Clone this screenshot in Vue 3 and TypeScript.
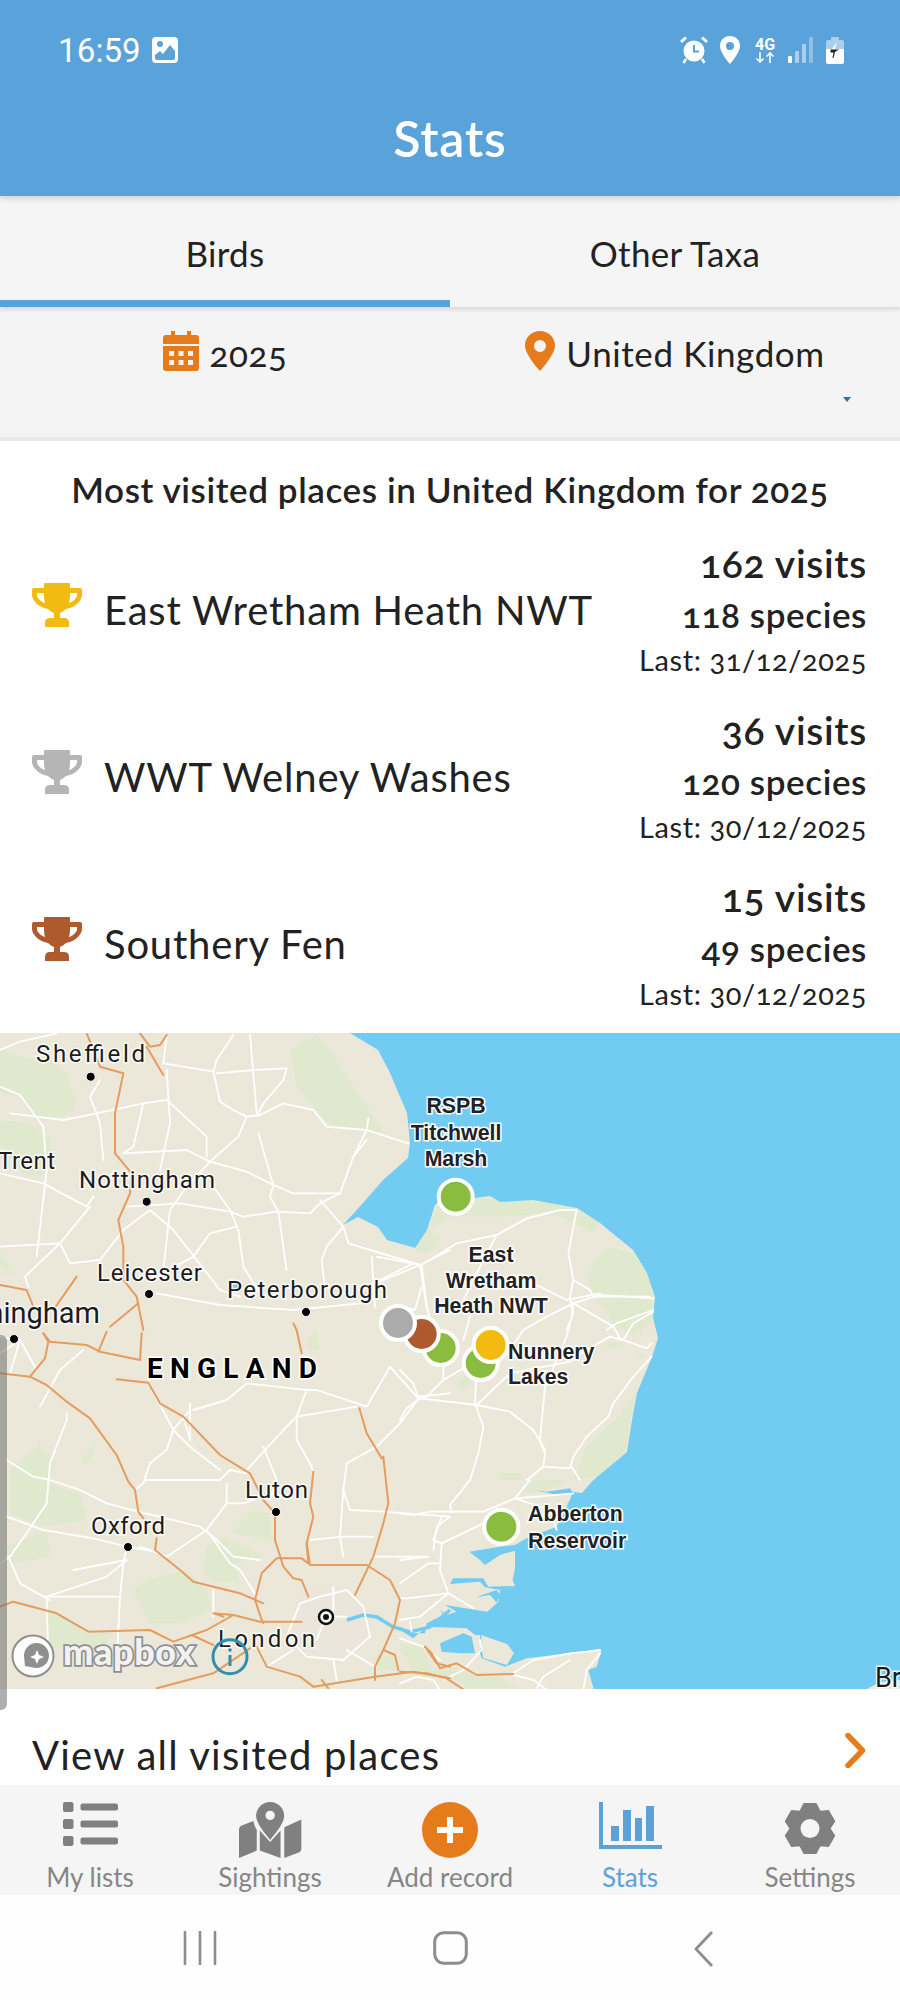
<script setup lang="ts">
interface Zone { x: number; y: number; green: string[]; water: string[]; white: string[]; orange: string[] }

const zones: Zone[] = [
  {
    x: 0, y: 1030,
    green: [
      'M0 50 L60 80 L150 90 L200 130 L230 220 L190 260 L110 275 L60 200 L0 190Z',
      'M0 270 L90 280 L150 330 L160 390 L130 440 L70 430 L0 340Z',
      'M870 60 L950 15 L990 60 L1060 170 L1100 230 L1150 305 L1100 300 L990 285 L950 240 L890 170Z',
      'M0 670 L20 690 L45 740 L20 730 L0 710Z',
      'M1240 650 L1290 605 L1320 630 L1300 660 L1260 670Z',
    ],
    water: ['M692 765 L718 755 L722 775 L695 780Z'],
    white: [
      'M650 130 L760 120 L860 115',
      'M490 100 L640 125 L660 215 L700 240 L740 260 L780 255 L850 220 L940 240 L980 290 L1100 300 L1225 340',
      'M750 15 L765 190 L770 250',
      'M700 15 L650 90 L640 125',
      'M860 115 L850 150 L790 220 L775 250',
      'M740 260 L715 320 L630 395 L560 470 L510 540 L490 720',
      'M630 395 L740 425 L820 465 L880 490 L1020 490 L1060 380 L1100 300',
      'M775 310 L820 465 L810 500 L835 545 L860 720',
      'M500 210 L430 220 L400 350 L370 370 L560 360 L630 395',
      'M500 210 L620 320 L620 380',
      'M500 120 L510 280 L480 420',
      'M300 150 L270 200 L300 280 L310 390',
      'M0 170 L60 195 L130 290 L140 420 L110 680',
      'M30 250 L190 270 L290 250 L430 220',
      'M0 430 L130 460 L260 530 L280 500',
      'M640 470 L690 540 L715 600 L730 710 L780 790',
      'M380 530 L540 520 L690 545 L730 560 L830 545 L930 550 L960 520 L1020 490',
      'M960 510 L1030 590 L1045 640 L1260 705 L1350 660',
      'M1030 590 L980 650 L965 690 L975 780',
      'M370 600 L450 540 L520 600 L590 690 L660 780 L720 800',
      'M0 650 L180 640 L210 700 L300 690 L370 600',
      'M180 640 L75 740 L85 770',
      'M470 790 L660 825 L880 840 L1080 820',
      'M1260 705 L1280 830',
      'M1080 780 L1260 705',
      'M710 590 L630 610 L580 680 L480 735',
      'M0 60 L60 35 L170 10',
      'M490 100 L500 20',
      'M270 530 L180 640',
      'M1060 380 L1100 330',
      'M1100 300 L1105 265',
    ],
    orange: [
      'M260 10 L300 110 L370 130 L345 250 L345 370 L395 430 L390 490 L355 570 L370 650 L370 750 L410 800 L430 900',
      'M420 10 L450 50 L480 45 L500 15',
      'M440 50 L490 135',
      'M230 740 L160 840',
      'M0 765 L80 780 L100 830',
      'M415 820 L330 890',
      'M880 880 L890 900',
    ],
  },
  {
    x: 300, y: 1030,
    green: [
      'M400 560 L420 510 L520 505 L600 510 L700 510 L830 535 L900 580 L880 610 L760 550 L600 560 L450 560 L390 600Z',
      'M345 640 L380 600 L420 620 L410 650 L350 665Z',
      'M860 730 L920 650 L1000 670 L1060 760 L1050 850 L960 880 L880 800Z',
    ],
    water: [],
    white: [
      'M365 705 L470 640 L590 615 L680 565 L780 540 L830 540 L805 670 L820 750 L870 780 L880 800 L1050 800',
      'M590 615 L550 690 L510 770 L480 830',
      'M640 735 L720 770 L800 810 L900 790',
      'M820 750 L810 800 L820 850 L800 900',
      'M1060 840 L950 880 L920 900',
      'M365 705 L380 830 L400 900',
      'M365 705 L230 680',
      'M215 680 L225 830',
      'M340 700 L220 760 L190 780',
    ],
    orange: [],
  },
  {
    x: 0, y: 1330,
    green: [
      'M30 420 L120 345 L170 400 L140 460 L240 490 L260 570 L130 590 L30 550Z',
      'M610 720 L620 650 L670 620 L720 640 L790 680 L700 700 L720 750 L640 760Z',
      'M690 610 L760 540 L810 550 L815 640 L760 620Z',
      'M400 780 L440 750 L560 720 L620 780 L640 840 L540 880 L450 880Z',
      'M140 830 L230 880 L260 910 L340 910 L300 970 L150 950Z',
      'M240 400 L290 330 L270 400Z',
      'M920 30 L950 0 L960 60 L925 60Z',
      'M1130 975 L1180 980 L1190 1020 L1130 1020Z',
      'M880 1075 L1000 1060 L1000 1080Z',
      'M20 650 L140 600 L150 680 L30 700Z',
    ],
    water: [],
    white: [
      'M250 60 L180 120 L120 230',
      'M445 158 L520 300 L570 350 L660 420',
      'M550 260 L570 330 L570 220',
      'M20 390 L100 440 L150 450 L240 480 L320 520 L415 545 L600 590 L640 620 L700 680 L780 690',
      'M20 560 L130 600 L280 625 L380 650 L470 665',
      'M380 650 L370 700 L360 800 L350 1000',
      'M220 720 L380 690',
      'M0 700 L30 680 L100 580 L140 520 L150 400 L200 270 L200 250',
      'M150 810 L60 760 L25 680',
      'M140 800 L320 740 L380 690',
      'M450 400 L500 360 L520 300 L570 240',
      'M450 400 L430 460 L405 480',
      'M440 450 L660 450 L690 420 L740 430',
      'M680 460 L680 520 L730 520 L760 510',
      'M680 520 L620 600',
      'M740 420 L850 300 L890 260 L1070 230',
      'M790 350 L830 450 L810 510',
      'M890 260 L890 330 L930 400 L940 425',
      'M890 260 L920 180 L950 180 L1100 230 L1170 110 L1250 200 L1350 190',
      'M920 180 L740 160 L680 210 L580 240',
      'M1040 400 L1130 350 L1200 280 L1260 200',
      'M1040 400 L1030 480 L1050 540 L1150 545 L1350 560',
      'M1030 480 L1020 620 L1030 680',
      'M930 630 L1030 620 L1120 620',
      'M1120 680 L1280 680',
      'M1350 560 L1310 590 L1300 660',
      'M620 600 L690 700 L720 720 L770 800',
      'M620 600 L500 680 L420 650',
      'M900 820 L960 800 L1040 780 L1090 830 L1110 920 L1030 990 L920 980 L860 920 L900 820',
      'M978 860 L1040 860 M978 860 L950 930 M1000 770 L1000 840',
      'M60 30 L0 70 M60 30 L30 130 M60 30 L110 120 M45 30 L0 20',
      'M800 1010 L880 960 M1000 990 L1010 1050 M1125 1010 L1040 960',
      'M640 780 L640 860 M360 800 L130 800',
      'M140 800 L145 1000',
    ],
    orange: [
      'M130 10 L150 35 L260 45 L300 65 L420 90',
      'M130 10 L145 35 L135 85 L90 140',
      'M0 130 L90 140 L140 165 L200 215 L270 265 L350 375 L385 455 L405 480 L415 545 L430 565',
      'M320 5 L295 65',
      'M425 10 L420 90',
      'M350 148 L445 158 L480 220 L550 260 L660 375 L750 430 L790 510 L825 550 L825 630 L850 710 L880 745 L905 750 L925 800',
      'M890 0 L905 70',
      'M1078 235 L1100 310 L1145 385 L1150 380 L1165 520 L1150 580 L1120 680 L1065 795',
      'M940 425 L930 520 L940 560 L920 640 L930 705 L1100 705 L1170 750 L1200 810 L1185 880 L1150 960 L1125 1010 L1125 1050',
      'M920 640 L925 700 L905 685 L830 685 L785 730 L765 810 L785 870 L790 880',
      'M905 875 L780 875 L700 855 L640 850 L670 860',
      'M700 855 L620 900 L520 935 L450 900 L265 905 L170 850 L40 815 L0 830',
      'M470 625 L465 660 L540 720 L580 755 L720 790 L790 820',
      'M575 915 L640 945',
      'M750 955 L640 1030 L470 1075',
      'M770 950 L800 1010 L900 1040 L940 1070 L1125 1040 L1240 1025 L1350 1045',
      'M1150 960 L1185 975 L1195 1020',
      'M965 1050 L985 1075',
      'M1275 950 L1310 1000 L1350 1010',
    ],
  },
  {
    x: 400, y: 1280,
    green: [
      'M170 315 L200 280 L220 300 L190 330Z',
      'M600 60 L680 20 L750 50 L760 120 L700 170 L640 130Z',
      'M610 195 L660 185 L670 195 L640 205Z',
      'M705 225 L735 225 L720 240Z',
      'M680 370 L710 340 L690 420 L680 510 L590 590 L520 600 L560 500 L620 440 L670 400Z',
      'M300 580 L360 580 L370 600 L300 600Z',
    ],
    water: [],
    white: [
      'M65 20 L45 90 L10 80',
      'M210 110 L190 180',
      'M760 55 L600 45 L520 70 L440 110 L370 150 L330 210',
      'M520 70 L515 110 L500 170 L435 320 L420 480 L435 520 L430 560 L380 600',
      'M760 95 L700 130 L670 180 L630 170 L560 210 L510 245 L330 280 L230 375',
      'M670 180 L740 205 L755 190',
      'M755 230 L700 290 L640 370 L625 410 L560 470 L520 530 L510 565 L430 560',
      'M520 70 L640 140 L660 175',
      'M230 260 L225 370 L250 440 L235 520 L210 600',
      'M230 375 L330 395 L400 450 L435 510',
      'M230 375 L60 355 L20 385 L0 420',
      'M60 355 L80 350 L130 300 L190 265',
      'M0 270 L40 310 L55 355',
      'M130 260 L130 300',
      'M515 560 L540 600',
    ],
    orange: [],
  },
  {
    x: 400, y: 1480,
    green: [
      'M0 490 L70 500 L90 560 L130 570 L170 560 L230 590 L300 590 L360 628 L200 628 L170 600 L100 590 L50 590 L0 510Z',
      'M350 40 L400 0 L500 0 L470 20 L400 40Z',
    ],
    water: [
      'M580 0 L545 40 L520 35 L500 80 L470 140 L380 175 L345 195 L300 200 L208 215 L240 240 L255 255 L300 225 L345 212 L345 265 L338 300 L345 318 L300 330 L295 365 L262 395 L135 375 L170 395 L140 405 L120 390 L130 405 L80 430 L75 460 L40 460 L0 440 L0 450 L40 475 L80 440 L200 445 L225 465 L240 465 L240 520 L245 535 L315 560 L380 535 L510 520 L605 510 L590 560 L565 570 L582 630 L1500 630 L1500 0Z',
      'M150 312 L160 295 L250 295 L265 320 L345 318 L300 330 L255 322 L240 305 Z',
      'M228 352 L290 330 L300 345 L290 368 L270 345Z',
      'M120 490 L190 460 L215 470 L225 520 L180 520 L125 515Z',
      'M405 30 L470 45 L520 40 L510 25 L440 35Z',
    ],
    white: [
      'M210 0 L170 50 L150 75 L155 95 L90 95 L40 105 L0 100',
      'M150 95 L250 95 L345 55 L390 0',
      'M345 55 L450 90 L470 150',
      'M350 55 L410 50 L520 40',
      'M125 110 L100 180 L125 190 L250 130 L300 100',
      'M125 190 L120 270 L145 340 L220 385',
      'M145 340 L20 355 L0 355',
      'M120 250 L85 250 L0 310',
      'M85 230 L0 240',
      'M0 420 L60 410 L145 340',
      'M30 425 L35 455',
      'M0 475 L70 500 L120 540',
      'M240 480 L245 510 L190 570 L130 600',
      'M340 580 L400 540 L510 520 L560 515 L600 510',
      'M510 540 L430 590 L410 625',
      'M340 585 L400 600 L440 630',
      'M600 520 L560 570 L550 630',
      'M0 610 L50 590 L100 600 L120 630',
    ],
    orange: [
      'M75 500 L95 520 L120 565 L170 550 L230 585 L340 582',
      'M0 575 L80 580 L140 595 L190 628',
    ],
  },
]

const seaNorth =
  'M350 1033 L378 1050 L390 1073 L407 1113 L410 1143 L408 1158 L383 1180 L363 1203 L343 1225 L358 1217 L378 1227 L387 1240 L412 1247 L415 1248 L427 1230 L435 1205 L440 1200 L475 1198 L490 1196 L500 1202 L533 1200 L577 1208 L600 1223 L633 1250 L647 1273 L655 1297 L653 1317 L658 1338 L652 1357 L637 1393 L632 1420 L627 1452 L597 1477 L593 1481 L900 1481 L900 1033Z'

interface PlaceLabel { t: string; x: number; y: number; w: number }
const places: PlaceLabel[] = [
  { t: 'Sheffield', x: 36, y: 1062, w: 109 },
  { t: 'Trent', x: -2, y: 1169, w: 57 },
  { t: 'Nottingham', x: 79, y: 1188, w: 136 },
  { t: 'Leicester', x: 97, y: 1281, w: 105 },
  { t: 'Peterborough', x: 227, y: 1298, w: 160 },
  { t: 'Luton', x: 245, y: 1498, w: 63 },
  { t: 'Oxford', x: 91, y: 1534, w: 74 },
  { t: 'London', x: 218, y: 1647, w: 97 },
]
const dots: [number, number][] = [
  [90.7, 1076.7], [146.7, 1201.7], [149, 1294], [306, 1312], [14, 1339], [276, 1512], [128, 1547],
]
interface SiteLabel { t: string; x: number; y: number; a: string }
const sites: SiteLabel[] = [
  { t: 'RSPB', x: 456, y: 1113, a: 'middle' },
  { t: 'Titchwell', x: 456, y: 1140, a: 'middle' },
  { t: 'Marsh', x: 456, y: 1166, a: 'middle' },
  { t: 'East', x: 491, y: 1262, a: 'middle' },
  { t: 'Wretham', x: 491, y: 1288, a: 'middle' },
  { t: 'Heath NWT', x: 491, y: 1313, a: 'middle' },
  { t: 'Nunnery', x: 508, y: 1359, a: 'start' },
  { t: 'Lakes', x: 508, y: 1384, a: 'start' },
  { t: 'Abberton', x: 528, y: 1521, a: 'start' },
  { t: 'Reservoir', x: 528, y: 1548, a: 'start' },
]
const pins: [number, number, string][] = [
  [455.7, 1196.7, '#8abd3f'],
  [440.7, 1348, '#8abd3f'],
  [421.7, 1334, '#ad5b2e'],
  [398, 1323, '#ababab'],
  [480.7, 1363, '#8abd3f'],
  [490.7, 1345, '#f2bb12'],
  [501.3, 1526.7, '#8abd3f'],
]

const rows = [
  { name: 'East Wretham Heath NWT', visits: '162 visits', species: '118 species', last: 'Last: 31/12/2025', color: '#f2bb12' },
  { name: 'WWT Welney Washes', visits: '36 visits', species: '120 species', last: 'Last: 30/12/2025', color: '#b5b5b5' },
  { name: 'Southery Fen', visits: '15 visits', species: '49 species', last: 'Last: 30/12/2025', color: '#ad5b2e' },
]

function buildGear(cx: number, cy: number, outer: number, root: number): string {
  const parts: string[] = []
  for (let i = 0; i < 6; i++) {
    const a = (i * Math.PI) / 3 - Math.PI / 2
    const pts: [number, number][] = [
      [a - 0.5, root], [a - 0.24, outer], [a + 0.24, outer], [a + 0.5, root],
    ]
    for (const [ang, r] of pts) {
      parts.push(`${(cx + r * Math.cos(ang)).toFixed(2)} ${(cy + r * Math.sin(ang)).toFixed(2)}`)
    }
  }
  return 'M' + parts.join(' L') + 'Z'
}
const gearPath = buildGear(26, 26.5, 25.5, 20)
</script>

<template>
  <div class="page">
    <header class="top">
      <div class="status">
        <div class="status-left">
          <span class="time">16:59</span>
          <svg class="img-icon" viewBox="0 0 26 26" width="26" height="26">
            <path fill="#fff" fill-rule="evenodd" d="M4 0H22Q26 0 26 4V22Q26 26 22 26H4Q0 26 0 22V4Q0 0 4 0ZM3 18V21Q3 23 5 23H21Q23 23 23 21V14L18 8L11 17L8 14ZM8 4A3 3 0 1 0 8 10A3 3 0 1 0 8 4Z" />
          </svg>
        </div>
        <div class="status-right">
          <svg viewBox="0 0 28 28" width="28" height="28">
            <circle cx="14" cy="15" r="10.5" fill="#fff" />
            <path d="M14 9V15.5H19" fill="none" stroke="#5aa2da" stroke-width="2" />
            <path d="M1 6L6 1.5M27 6L22 1.5" stroke="#fff" stroke-width="3" />
            <path d="M6 23L3.5 27M22 23L24.5 27" stroke="#fff" stroke-width="2.5" />
          </svg>
          <svg viewBox="0 0 20 28" width="20" height="28">
            <path fill="#fff" fill-rule="evenodd" d="M10 0C4 0 0 4.400 0 10C0 17 10 28 10 28C10 28 20 17 20 10C20 4.400 16 0 10 0ZM10 6A4 4 0 1 1 10 14A4 4 0 1 1 10 6Z" />
          </svg>
          <div class="net">
            <span>4G</span>
            <svg viewBox="0 0 20 11" width="20" height="11">
              <path d="M5 0V10M1.500 6.500L5 10L8.500 6.500M15 11V1M11.500 4.500L15 1L18.500 4.500" fill="none" stroke="#fff" stroke-width="1.600" />
            </svg>
          </div>
          <svg viewBox="0 0 26 26" width="26" height="26">
            <rect x="0" y="19" width="4" height="7" rx="1" fill="#fff" />
            <rect x="7" y="14" width="4" height="12" rx="1" fill="#a9cfec" />
            <rect x="14" y="7" width="4" height="19" rx="1" fill="#a9cfec" />
            <rect x="21" y="0" width="4" height="26" rx="1" fill="#8fc0e6" />
          </svg>
          <svg viewBox="0 0 18 27" width="18" height="27">
            <path fill="#a9cfec" d="M5 0H13V3H16Q18 3 18 5V12H0V5Q0 3 2 3H5Z" />
            <path fill="#fff" d="M0 12H18V25Q18 27 16 27H2Q0 27 0 25Z" />
            <path fill="#fff" d="M11 5L6 12H9Z" />
            <path fill="#222" d="M4.500 12.500H13L9 15L7.500 21L6.500 21L7.500 15.500H4.500Z" />
          </svg>
        </div>
      </div>
      <h1 class="title">Stats</h1>
    </header>

    <nav class="tabs">
      <div class="tab active">Birds</div>
      <div class="tab">Other Taxa</div>
    </nav>

    <section class="filters">
      <div class="filter">
        <svg viewBox="0 0 36 40" width="36" height="40">
          <path fill="#e67b1c" fill-rule="evenodd" d="M8 0H12V4H24V0H28V4H33Q36 4 36 7V13H0V7Q0 4 3 4H8ZM0 15H36V37Q36 40 33 40H3Q0 40 0 37ZM6 20V25H11V20ZM15.500 20V25H20.500V20ZM25 20V25H30V20ZM6 29V34H11V29ZM15.500 29V34H20.500V29ZM25 29V34H30V29Z" />
        </svg>
        <span class="filter-text">2025</span>
      </div>
      <div class="filter">
        <svg viewBox="0 0 30 40" width="30" height="40">
          <path fill="#e67b1c" fill-rule="evenodd" d="M15 0C6.500 0 0 6.500 0 14.500C0 24 15 40 15 40C15 40 30 24 30 14.500C30 6.500 23.500 0 15 0ZM15 9A6 6 0 1 1 15 21A6 6 0 1 1 15 9Z" />
        </svg>
        <span class="filter-text">United Kingdom</span>
      </div>
      <i class="caret"></i>
    </section>

    <main class="content">
      <h2 class="heading">Most visited places in United Kingdom for 2025</h2>
      <div v-for="row in rows" :key="row.name" class="row">
        <svg class="trophy" viewBox="0 0 50 44" width="50" height="44">
          <path :fill="row.color" fill-rule="evenodd" d="M12 1Q12 0 13 0H37Q38 0 38 1V5H48Q50 5 50 7V12C50 18 42 25 34 26C32 28 30 29 28 30V35H32Q37 35 37 40V44H13V40Q13 35 18 35H22V30C20 29 18 28 16 26C8 25 0 18 0 12V7Q0 5 2 5H12ZM5 10V12C5 15 9 19 13 20C12 17 12 13 12 10ZM45 10V12C45 15 41 19 37 20C38 17 38 13 38 10Z" />
        </svg>
        <span class="place">{{ row.name }}</span>
        <div class="figures">
          <div class="visits">{{ row.visits }}</div>
          <div class="species">{{ row.species }}</div>
          <div class="last">{{ row.last }}</div>
        </div>
      </div>

      <svg class="map" viewBox="0 1033 900 656" width="900" height="656">
        <rect x="0" y="1033" width="900" height="656" fill="#ebe8da" />
        <path d="M300 1596 L333 1583 L360 1597 L370 1623 L363 1650 L333 1660 L300 1650 L293 1623Z" fill="#ece5dc" />
        <g v-for="z in zones" :key="'g' + z.x + z.y" :transform="`translate(${z.x} ${z.y}) scale(.33333)`">
          <path v-for="d in z.green" :key="d" :d="d" fill="#e0e8cd" />
        </g>
        <path :d="seaNorth" fill="#72cbf0" />
        <g v-for="z in zones" :key="'w' + z.x + z.y" :transform="`translate(${z.x} ${z.y}) scale(.33333)`">
          <path v-for="d in z.water" :key="d" :d="d" fill="#72cbf0" />
        </g>
        <path d="M481 1635 L507 1644 L514 1653 L507 1665 L483 1658 L482 1650Z" fill="#ebe8da" />
        <path d="M347 1620 L363 1615 L377 1617 L393 1627 L410 1632 L430 1627 L450 1610" fill="none" stroke="#72cbf0" stroke-width="3.500" />
        <path d="M867 1689 L880 1682 L900 1680 L900 1689Z" fill="#ebe8da" />
        <g v-for="z in zones" :key="'r' + z.x + z.y" :transform="`translate(${z.x} ${z.y}) scale(.33333)`">
          <path v-for="d in z.white" :key="d" :d="d" class="road" />
        </g>
        <g v-for="z in zones" :key="'o' + z.x + z.y" :transform="`translate(${z.x} ${z.y}) scale(.33333)`">
          <path v-for="d in z.orange" :key="d" :d="d" class="motorway" />
        </g>

        <g v-for="p in pins" :key="p[2] + p[0]">
          <circle :cx="p[0]" :cy="p[1]" r="17" :fill="p[2]" stroke="#fff" stroke-width="4" />
        </g>

        <text v-for="l in places" :key="l.t" :x="l.x" :y="l.y" :textLength="l.w" lengthAdjust="spacing" class="city">{{ l.t }}</text>
        <text x="100" y="1323" text-anchor="end" class="city big">Birmingham</text>
        <text x="875" y="1687" class="city br">Br</text>
        <text x="147" y="1378" textLength="170" lengthAdjust="spacing" class="country">ENGLAND</text>
        <text v-for="s in sites" :key="s.t" :x="s.x" :y="s.y" :text-anchor="s.a" class="site">{{ s.t }}</text>

        <circle v-for="d in dots" :key="d[0]" :cx="d[0]" :cy="d[1]" r="4.500" fill="#000" stroke="#fff" stroke-width="1" />
        <circle cx="326" cy="1617" r="7" fill="#fff" stroke="#111" stroke-width="2.500" />
        <circle cx="326" cy="1617" r="3" fill="#111" />

        <circle cx="33" cy="1656" r="20.500" fill="#fff" fill-opacity=".85" stroke="#8f8f8f" stroke-width="2" />
        <path d="M25 1666 L24 1656 A12.500 12.500 0 1 1 36 1668Z" fill="#8f8f8f" />
        <path d="M37 1650 L39 1655 L44 1657 L39 1659 L37 1664 L35 1659 L30 1657 L35 1655Z" fill="#fff" />
        <text x="63" y="1665" textLength="132" lengthAdjust="spacing" class="brand">mapbox</text>
        <circle cx="230" cy="1656.700" r="17" fill="none" stroke="#2f8fae" stroke-width="3" />
        <path d="M230 1655V1666" stroke="#2f8fae" stroke-width="3" />
        <circle cx="230" cy="1650" r="1.800" fill="#2f8fae" />
      </svg>

      <div class="view-all">
        <span>View all visited places</span>
        <svg viewBox="0 0 21 35" width="21" height="35">
          <path d="M3 2.500L17.500 17.500L3 32.500" fill="none" stroke="#e67b1c" stroke-width="5.500" stroke-linecap="round" stroke-linejoin="round" />
        </svg>
      </div>
    </main>

    <footer class="bar">
      <div class="bar-item">
        <div class="bar-icon">
          <svg viewBox="0 0 55 44" width="55" height="44">
            <g fill="#808080">
              <rect x="0" y="0" width="10.500" height="10" rx="2" />
              <rect x="0" y="17" width="10.500" height="10" rx="2" />
              <rect x="0" y="34" width="10.500" height="10" rx="2" />
              <rect x="17.500" y="1.500" width="37.500" height="7" rx="2" />
              <rect x="17.500" y="18.500" width="37.500" height="7" rx="2" />
              <rect x="17.500" y="35.500" width="37.500" height="7" rx="2" />
            </g>
          </svg>
        </div>
        <span>My lists</span>
      </div>
      <div class="bar-item">
        <div class="bar-icon">
          <svg viewBox="717 65 188 167" width="63" height="56">
            <g fill="#808080">
              <path fill-rule="evenodd" d="M810 65C785 65 768 85 768 107C768 128 795 160 810 178C825 160 852 128 852 107C852 85 835 65 810 65ZM810 91A14 14 0 1 1 810 119A14 14 0 1 1 810 91Z" />
              <path d="M760 122L725 135Q717 138 717 146V232L770 210V148Q762 135 760 122Z" />
              <path d="M779 150L810 184L841 150V232L779 210Z" />
              <path d="M852 140L903 117V205Q903 212 897 215L852 232Z" />
            </g>
          </svg>
        </div>
        <span>Sightings</span>
      </div>
      <div class="bar-item">
        <div class="bar-icon">
          <svg viewBox="0 0 56 56" width="56" height="56">
            <circle cx="28" cy="28" r="28" fill="#e67b1c" />
            <path d="M28 15V41M15 28H41" stroke="#fff" stroke-width="6" />
          </svg>
        </div>
        <span>Add record</span>
      </div>
      <div class="bar-item current">
        <div class="bar-icon">
          <svg viewBox="0 0 63 48" width="63" height="48">
            <path fill="#5aa2da" d="M0 0H4V43H63V47H0ZM12 24H20V39H12ZM24 8H32V39H24ZM36 16H43V39H36ZM47 4H55V39H47Z" />
          </svg>
        </div>
        <span>Stats</span>
      </div>
      <div class="bar-item">
        <div class="bar-icon">
          <svg viewBox="0 0 52 53" width="52" height="53">
            <path :d="gearPath" fill="#808080" stroke="#808080" stroke-width="1.500" stroke-linejoin="round" />
            <circle cx="26" cy="26.500" r="9.500" fill="#f5f5f5" />
          </svg>
        </div>
        <span>Settings</span>
      </div>
    </footer>

    <div class="sysnav">
      <svg viewBox="0 0 34 34" width="34" height="34">
        <path d="M2 0V34M17 0V34M32 0V34" stroke="#8d8d8d" stroke-width="2.600" />
      </svg>
      <svg viewBox="0 0 35 34" width="35" height="34">
        <rect x="1.700" y="1.700" width="31.600" height="30.600" rx="9" fill="none" stroke="#8d8d8d" stroke-width="3" />
      </svg>
      <svg viewBox="0 0 20 36" width="20" height="36">
        <path d="M18 1L2 18L18 35" fill="none" stroke="#8d8d8d" stroke-width="2.800" />
      </svg>
    </div>

    <div class="scroll-thumb"></div>
  </div>
</template>

<style>
html, body { margin: 0; padding: 0; background: #fff; }
</style>

<style scoped>
.page {
  position: relative;
  width: 900px;
  height: 2000px;
  overflow: hidden;
  font-family: Lato, "Open Sans", sans-serif;
  font-feature-settings: "onum";
  color: #222;
  background: #fff;
}
.top {
  height: 196px;
  background: #5aa2da;
  color: #fff;
  box-shadow: 0 2px 6px rgba(0, 0, 0, .18);
  position: relative;
  z-index: 3;
}
.status {
  height: 100px;
  padding: 0 56px 0 58px;
  display: flex;
  justify-content: space-between;
  align-items: center;
}
.status-left { display: flex; align-items: center; gap: 11px; }
.time { font-family: Roboto, sans-serif; font-size: 33px; font-feature-settings: "lnum"; }
.status-right { display: flex; align-items: center; gap: 12px; }
.net { display: flex; flex-direction: column; align-items: center; width: 22px; margin: 0 0 0 2px; }
.net span { font: 700 16px/15px Roboto, sans-serif; }
.title {
  margin: 0;
  text-align: center;
  font-size: 50px;
  letter-spacing: .8px;
  font-weight: 600;
  line-height: 56px;
  margin-top: 10px;
}
.tabs {
  display: flex;
  height: 111px;
  background: #f5f5f5;
  box-shadow: 0 2px 5px rgba(0, 0, 0, .14);
  position: relative;
  z-index: 2;
}
.tab {
  flex: 1;
  text-align: center;
  font-size: 35px;
  letter-spacing: .3px;
  line-height: 114px;
  box-sizing: border-box;
}
.tab.active { border-bottom: 7px solid #5aa2da; }
.filters {
  position: relative;
  height: 130px;
  display: grid;
  grid-template-columns: 450px 450px;
  background: #f4f4f4;
  border-bottom: 4px solid #e8e8e8;
  font-size: 35px;
}
.filter {
  display: flex;
  justify-content: center;
  align-items: center;
  gap: 11px;
  height: 87px;
}
.filter-text { padding-top: 4px; letter-spacing: .6px; }
.caret {
  position: absolute;
  left: 843px;
  top: 90px;
  border: 4px solid transparent;
  border-top: 5px solid #2f6fa8;
  border-bottom: 0;
}
.heading {
  margin: 0;
  height: 91px;
  line-height: 96px;
  text-align: center;
  font-size: 35px;
  letter-spacing: .6px;
  font-weight: 600;
}
.row {
  height: 167px;
  display: flex;
  align-items: center;
  padding: 0 33px 0 32px;
}
.trophy { flex: none; margin-top: -21px; }
.place { flex: 1; font-size: 40px; letter-spacing: .8px; padding-left: 22px; margin-top: -11px; }
.figures { text-align: right; line-height: 1; margin-top: -13px; }
.visits { font-size: 39px; font-weight: 600; letter-spacing: .7px; }
.species { font-size: 35px; font-weight: 600; letter-spacing: .6px; margin-top: 14px; }
.last { font-size: 29px; letter-spacing: .6px; margin-top: 13px; }
.map { display: block; }
.road { fill: none; stroke: #fff; stroke-width: 5.500; stroke-linejoin: round; stroke-linecap: round; }
.motorway { fill: none; stroke: #e59c5f; stroke-width: 6; stroke-linejoin: round; stroke-linecap: round; }
.city {
  font-family: Roboto, sans-serif;
  font-size: 24px;
  fill: #1c1c1c;
  stroke: #fff;
  stroke-width: 3px;
  stroke-opacity: .85;
  paint-order: stroke;
}
.big { font-size: 29px; }
.br { font-size: 27px; }
.country {
  font-family: Roboto, sans-serif;
  font-size: 28px;
  font-weight: 700;
  fill: #000;
  stroke: #fff;
  stroke-width: 3px;
  paint-order: stroke;
}
.site {
  font-family: "Liberation Sans", sans-serif;
  font-size: 21.300px;
  font-weight: 700;
  fill: #222;
  stroke: #fff;
  stroke-width: 3px;
  paint-order: stroke;
}
.brand {
  font-family: Lato, sans-serif;
  font-size: 36px;
  font-weight: 900;
  fill: #f2f2f2;
  stroke: #8f8f8f;
  stroke-width: 3.500px;
  paint-order: stroke;
}
.view-all {
  height: 96px;
  box-sizing: border-box;
  padding: 34px 34px 0 32px;
  display: flex;
  justify-content: space-between;
  align-items: center;
  font-size: 40px;
  letter-spacing: 1.2px;
}
.view-all span { padding-top: 2px; }
.view-all svg { margin-top: -7px; }
.bar {
  height: 110px;
  display: grid;
  grid-template-columns: repeat(5, 180px);
  background: #f5f5f5;
}
.bar-item {
  display: flex;
  flex-direction: column;
  align-items: center;
  font-size: 26px;
  color: #868686;
}
.bar-icon {
  height: 74px;
  padding-top: 17px;
  box-sizing: border-box;
  display: flex;
  align-items: flex-start;
}
.bar-item span { line-height: 28px; margin-top: 4px; }
.current { color: #5aa2da; }
.sysnav {
  height: 105px;
  background: #fefefe;
  display: grid;
  grid-template-columns: 400px 100px 400px;
  justify-items: center;
  align-items: start;
  padding-top: 36px;
  box-sizing: border-box;
}
.sysnav svg:nth-child(1) { justify-self: end; transform: translateX(-183px); }
.sysnav svg:nth-child(3) { justify-self: start; transform: translateX(194px); }
.scroll-thumb {
  position: absolute;
  left: 0;
  top: 1335px;
  width: 7px;
  height: 375px;
  background: rgba(110, 110, 110, .55);
  border-radius: 0 6px 6px 0;
}
</style>
